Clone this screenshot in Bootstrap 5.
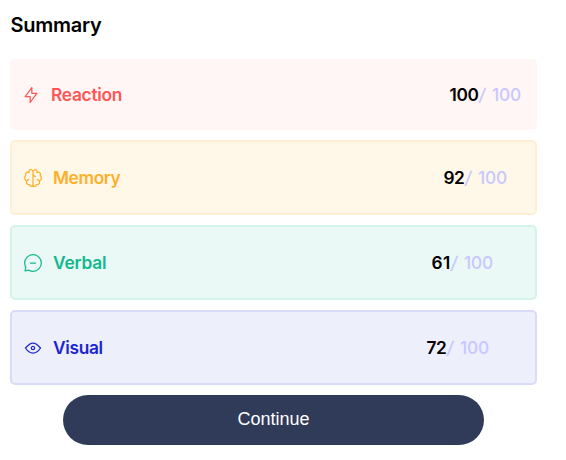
<!DOCTYPE html>
<html lang="en">
<head>
<meta charset="utf-8">
<meta name="viewport" content="width=device-width, initial-scale=1">
<title>Summary</title>
<link href="https://cdn.jsdelivr.net/npm/bootstrap@5.3.0/dist/css/bootstrap.min.css" rel="stylesheet">
<style>
body { font-family: Inter, "Liberation Sans", sans-serif; font-size: 17.3px; line-height: 24px; color: #000; background: #fff; }
.summary { width: 527px; margin-left: 10px; padding-top: 13px; }
.summary-title { font-size: 20px; line-height: 24px; font-weight: 600; margin-bottom: 22px; padding-left: .5px; letter-spacing: -.25px; }
.score-list { gap: 10px; }
.score { height: 75px; border: 2px solid; border-radius: 5px; padding-left: 11px; font-weight: 600; }
.score svg { width: 20px; height: 20px; fill: none; stroke: currentColor; stroke-width: 1.25; stroke-linecap: round; stroke-linejoin: round; }
.score-label { margin-left: 10px; letter-spacing: -.25px; }
.memory .score-label { letter-spacing: -.35px; }
.verbal .score-label { letter-spacing: -.15px; }
.visual .score-label { letter-spacing: -.3px; }
.score-value { letter-spacing: -.4px; }
.total { color: #c8c7ff; font-weight: 500; letter-spacing: -.2px; word-spacing: 1px; }
.slash { display: inline-block; transform: skewX(-8deg); margin: 0 1.5px 0 .5px; }
.reaction { height: 71px; border: 0; background: #fff6f5; color: #f55; padding-right: 16px; }
.memory { background: #fff7e8; border-color: #ffefd2; color: #ffb02a; padding-right: 28px; }
.verbal { background: #ebf9f6; border-color: #d4f3eb; color: #12b88d; padding-right: 42px; }
.verbal .score-value { letter-spacing: .3px; }
.visual { background: #edeffb; border-color: #d8dcf8; color: #1a25d0; padding-right: 46px; }
.continue-btn { --bs-btn-color: #fff; --bs-btn-bg: #303b59; --bs-btn-hover-color: #fff; --bs-btn-hover-bg: #3f4d75; width: 421px; height: 50px; margin-top: 10px; padding: 0 0 2px; border: 0; font: 18px "Liberation Sans", sans-serif; }
</style>
</head>
<body>
<main class="summary d-flex flex-column">
  <h1 class="summary-title">Summary</h1>
  <div class="score-list d-flex flex-column">
    <div class="score reaction d-flex align-items-center">
      <svg viewBox="0 0 20 20" aria-hidden="true"><path d="M10.833 8.333V2.5l-6.666 9.167h5V17.5l6.666-9.167h-5Z"/></svg>
      <span class="score-label">Reaction</span>
      <span class="score-value ms-auto text-black">100<span class="total"><span class="slash">/</span> 100</span></span>
    </div>
    <div class="score memory d-flex align-items-center">
      <svg viewBox="0 0 20 20" aria-hidden="true"><path d="M5.833 11.667a2.5 2.5 0 1 0 .834 4.858M3.553 13.004a3.333 3.333 0 0 1-.728-5.53m.025-.067a2.083 2.083 0 0 1 2.983-2.824m.199.054A2.083 2.083 0 1 1 10 3.75v12.917a1.667 1.667 0 0 1-3.333 0M10 5.833a2.5 2.5 0 0 0 2.5 2.5m1.667 3.334a2.5 2.5 0 1 1-.834 4.858M16.447 13.004a3.334 3.334 0 0 0 .728-5.53m-.025-.067a2.083 2.083 0 0 0-2.983-2.824M10 3.75a2.085 2.085 0 0 1 2.538-2.033 2.084 2.084 0 0 1 1.43 2.92m-.635 12.03a1.667 1.667 0 0 1-3.333 0"/></svg>
      <span class="score-label">Memory</span>
      <span class="score-value ms-auto text-black">92<span class="total"><span class="slash">/</span> 100</span></span>
    </div>
    <div class="score verbal d-flex align-items-center">
      <svg viewBox="0 0 20 20" aria-hidden="true"><path d="M7.5 10h5M10 18.333A8.333 8.333 0 1 0 1.667 10c0 1.518.406 2.942 1.115 4.167l-.699 3.75 3.75-.699A8.295 8.295 0 0 0 10 18.333Z"/></svg>
      <span class="score-label">Verbal</span>
      <span class="score-value ms-auto text-black">61<span class="total"><span class="slash">/</span> 100</span></span>
    </div>
    <div class="score visual d-flex align-items-center">
      <svg viewBox="0 0 20 20" aria-hidden="true"><path d="M10 11.667a1.667 1.667 0 1 0 0-3.334 1.667 1.667 0 0 0 0 3.334ZM17.5 10c-1.574 2.492-4.402 5-7.5 5s-5.926-2.508-7.5-5C4.416 7.632 6.66 5 10 5s5.584 2.632 7.5 5Z"/></svg>
      <span class="score-label">Visual</span>
      <span class="score-value ms-auto text-black">72<span class="total"><span class="slash">/</span> 100</span></span>
    </div>
  </div>
  <button type="button" class="btn continue-btn rounded-pill align-self-center">Continue</button>
</main>
<script src="https://cdn.jsdelivr.net/npm/bootstrap@5.3.0/dist/js/bootstrap.bundle.min.js"></script>
</body>
</html>
